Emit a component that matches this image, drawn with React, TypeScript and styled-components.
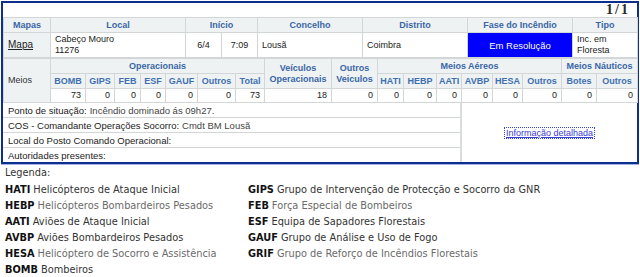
import styled, {createGlobalStyle} from "styled-components";

const GlobalStyle = createGlobalStyle`
  html, body {
    margin: 0;
    padding: 0;
    background: #ffffff;
  }
  body {
    font-family: "Liberation Sans", Arial, sans-serif;
    color: #222;
  }
`;

const Frame = styled.div`
  margin: 1px 1px 0 1px;
  border: 2px solid #0d2e8c;
  box-shadow: 0 1px 0 #9fb3e6;
  background: #fff;
`;

const TopBar = styled.div`
  height: 14px;
  display: flex;
  justify-content: flex-end;
  align-items: center;
  padding-right: 7px;
`;

const Pager = styled.span`
  font-family: "Liberation Serif", "Times New Roman", serif;
  font-weight: 700;
  font-size: 14px;
  letter-spacing: 2px;
  color: #2a2a2a;
`;

const Grid = styled.table`
  width: 100%;
  table-layout: fixed;
  border-collapse: collapse;
  font-size: 9px;
  line-height: 11px;
`;

const Row = styled.tr<{$h: number}>`
  height: ${(p) => p.$h}px;
`;

const Head = styled.th<{$sub?: boolean}>`
  background: #eef2f3;
  color: ${(p) => (p.$sub ? "#3f6fb0" : "#3a66a6")};
  font-weight: 700;
  text-align: center;
  border: 1px solid #d2d6d6;
  padding: 0 2px;
  overflow: hidden;
  white-space: nowrap;
`;

const Label = styled.td`
  background: #eef2f3;
  color: #333;
  border: 1px solid #d2d6d6;
  padding: 0 4px;
  vertical-align: middle;
`;

const Cell = styled.td<{$align?: "left" | "center" | "right"}>`
  background: #fff;
  color: #222;
  border: 1px solid #d2d6d6;
  padding: 0 4px;
  text-align: ${(p) => p.$align ?? "left"};
  vertical-align: middle;
`;

const PhaseCell = styled.td`
  background: #0000ff;
  color: #fff;
  border: 1px solid #d2d6d6;
  text-align: center;
  font-size: 9.5px;
`;

const MapLink = styled.a`
  color: #222;
  text-decoration: underline;
  font-size: 10px;
`;

const Info = styled.div`
  display: grid;
  grid-template-columns: 459px 1fr;
`;

const InfoList = styled.div`
  display: flex;
  flex-direction: column;
  border-right: 2px solid #d8dcdc;
`;

const InfoRow = styled.div<{$last?: boolean}>`
  height: 14px;
  display: flex;
  align-items: center;
  padding-left: 5px;
  font-size: 9.5px;
  color: #222;
  border-bottom: ${(p) => (p.$last ? "none" : "1px solid #d2d6d6")};
  white-space: nowrap;
`;

const InfoValue = styled.span`
  color: #444;
  margin-left: 3px;
`;

const Detail = styled.div`
  display: flex;
  align-items: center;
  justify-content: center;
`;

const DetailLink = styled.a`
  color: #3b3bd6;
  text-decoration: underline;
  font-size: 9px;
  outline: 1px dotted #3344cc;
  outline-offset: 0;
  padding: 0 1px;
`;

const Legend = styled.div`
  padding: 1px 0 0 5px;
  font-family: "DejaVu Sans", Verdana, sans-serif;
  font-size: 9.8px;
`;

const LegendTitle = styled.div`
  color: #333;
  height: 18px;
  line-height: 16px;
`;

const LegendColumns = styled.div`
  display: grid;
  grid-template-columns: 243px 1fr;
`;

const LegendColumn = styled.div`
  display: flex;
  flex-direction: column;
`;

const LegendItem = styled.div<{$muted?: boolean}>`
  height: 16px;
  line-height: 14px;
  color: ${(p) => (p.$muted ? "#6a6a6a" : "#333")};
  white-space: nowrap;
`;

const Abbr = styled.b`
  color: #111;
  margin-right: 3px;
`;

const meiosCols = [47, 35, 29, 26, 25, 32, 38, 29, 67, 46, 26, 33, 25, 31, 30, 39, 35, 41];
const opHeads = ["BOMB", "GIPS", "FEB", "ESF", "GAUF", "Outros", "Total"];
const airHeads = ["HATI", "HEBP", "AATI", "AVBP", "HESA", "Outros"];
const seaHeads = ["Botes", "Outros"];
const values = [73, 0, 0, 0, 0, 0, 73, 18, 0, 0, 0, 0, 0, 0, 0, 0, 0];

const leftLegend = [
  {abbr: "HATI", text: "Helicópteros de Ataque Inicial"},
  {abbr: "HEBP", text: "Helicópteros Bombardeiros Pesados", muted: true},
  {abbr: "AATI", text: "Aviões de Ataque Inicial"},
  {abbr: "AVBP", text: "Aviões Bombardeiros Pesados"},
  {abbr: "HESA", text: "Helicóptero de Socorro e Assistência", muted: true},
  {abbr: "BOMB", text: "Bombeiros"},
];

const rightLegend = [
  {abbr: "GIPS", text: "Grupo de Intervenção de Protecção e Socorro da GNR"},
  {abbr: "FEB", text: "Força Especial de Bombeiros", muted: true},
  {abbr: "ESF", text: "Equipa de Sapadores Florestais"},
  {abbr: "GAUF", text: "Grupo de Análise e Uso de Fogo"},
  {abbr: "GRIF", text: "Grupo de Reforço de Incêndios Florestais", muted: true},
];

export default function App() {
  return (
    <>
      <GlobalStyle />
      <Frame>
        <TopBar>
          <Pager>1/1</Pager>
        </TopBar>

        <Grid>
          <colgroup>
            {[47, 135, 36, 36, 105, 105, 105, 65].map((w, i) => (
              <col key={i} style={{width: w}} />
            ))}
          </colgroup>
          <tbody>
            <Row $h={15}>
              <Head>Mapas</Head>
              <Head>Local</Head>
              <Head colSpan={2}>Início</Head>
              <Head>Concelho</Head>
              <Head>Distrito</Head>
              <Head>Fase do Incêndio</Head>
              <Head>Tipo</Head>
            </Row>
            <Row $h={25}>
              <Label>
                <MapLink href="#">Mapa</MapLink>
              </Label>
              <Cell>
                Cabeço Mouro
                <br />
                11276
              </Cell>
              <Cell $align="center">6/4</Cell>
              <Cell $align="center">7:09</Cell>
              <Cell>Lousã</Cell>
              <Cell>Coimbra</Cell>
              <PhaseCell>Em Resolução</PhaseCell>
              <Cell>
                Inc. em
                <br />
                Floresta
              </Cell>
            </Row>
          </tbody>
        </Grid>

        <Grid>
          <colgroup>
            {meiosCols.map((w, i) => (
              <col key={i} style={{width: w}} />
            ))}
          </colgroup>
          <tbody>
            <Row $h={15}>
              <Label rowSpan={3}>Meios</Label>
              <Head colSpan={7}>Operacionais</Head>
              <Head rowSpan={2}>
                Veículos
                <br />
                Operacionais
              </Head>
              <Head rowSpan={2}>
                Outros
                <br />
                Veiculos
              </Head>
              <Head colSpan={6}>Meios Aéreos</Head>
              <Head colSpan={2}>Meios Náuticos</Head>
            </Row>
            <Row $h={15}>
              {[...opHeads, ...airHeads, ...seaHeads].map((h, i) => (
                <Head key={i} $sub>
                  {h}
                </Head>
              ))}
            </Row>
            <Row $h={14}>
              {values.map((v, i) => (
                <Cell key={i} $align="right">
                  {v}
                </Cell>
              ))}
            </Row>
          </tbody>
        </Grid>

        <Info>
          <InfoList>
            <InfoRow>
              Ponto de situação:<InfoValue>Incêndio dominado ás 09h27.</InfoValue>
            </InfoRow>
            <InfoRow>
              COS - Comandante Operações Socorro:<InfoValue>Cmdt BM Lousã</InfoValue>
            </InfoRow>
            <InfoRow>Local do Posto Comando Operacional:</InfoRow>
            <InfoRow $last>Autoridades presentes:</InfoRow>
          </InfoList>
          <Detail>
            <DetailLink href="#">Informação detalhada</DetailLink>
          </Detail>
        </Info>
      </Frame>

      <Legend>
        <LegendTitle>Legenda:</LegendTitle>
        <LegendColumns>
          <LegendColumn>
            {leftLegend.map((item) => (
              <LegendItem key={item.abbr} $muted={item.muted}>
                <Abbr>{item.abbr}</Abbr>
                {item.text}
              </LegendItem>
            ))}
          </LegendColumn>
          <LegendColumn>
            {rightLegend.map((item) => (
              <LegendItem key={item.abbr} $muted={item.muted}>
                <Abbr>{item.abbr}</Abbr>
                {item.text}
              </LegendItem>
            ))}
          </LegendColumn>
        </LegendColumns>
      </Legend>
    </>
  );
}
